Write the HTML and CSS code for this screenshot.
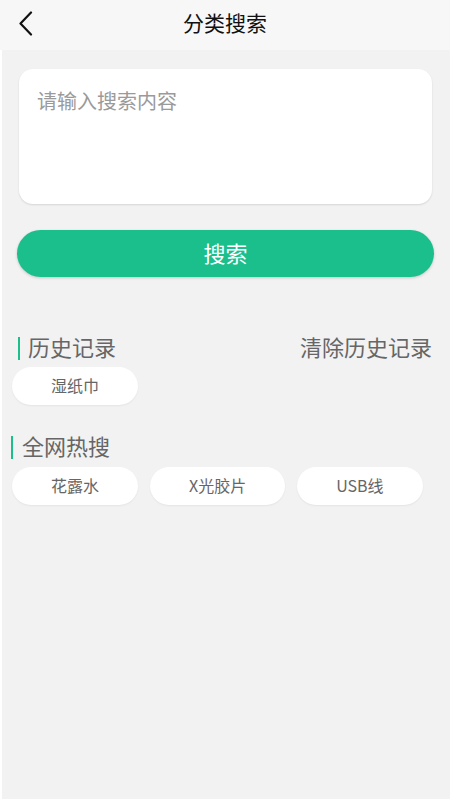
FILE: index.html
```html
<!DOCTYPE html>
<html lang="zh-CN">
<head>
<meta charset="utf-8">
<title>分类搜索</title>
<link rel="stylesheet" href="styles.css">
</head>
<body>
<div class="app">
  <header class="header">
    <span class="back">
      <svg width="14" height="26" viewBox="0 0 14 26"><path d="M12 1.5 L1.5 12.5 L12 23.5" fill="none" stroke="#111" stroke-width="2.2" stroke-linecap="round" stroke-linejoin="round"/></svg>
    </span>
    <h1 class="title">分类搜索</h1>
  </header>
  <main class="content">
    <div class="search-box">
      <span class="placeholder">请输入搜索内容</span>
    </div>
    <div class="search-btn">搜索</div>

    <div class="sec-head sec-history">
      <span class="sec-title"><i class="bar"></i>历史记录</span>
      <span class="clear">清除历史记录</span>
    </div>
    <div class="chips">
      <span class="chip">湿纸巾</span>
    </div>

    <div class="sec-head sec-hot">
      <span class="sec-title"><i class="bar"></i>全网热搜</span>
    </div>
    <div class="chips">
      <span class="chip">花露水</span>
      <span class="chip">X光胶片</span>
      <span class="chip">USB线</span>
    </div>
  </main>
</div>
</body>
</html>
```

FILE: styles.css
```css
* { box-sizing: border-box; }
html, body { margin: 0; padding: 0; }
body {
  font-family: "Noto Sans CJK SC", "Noto Sans", sans-serif;
  background: #fff;
}
.app {
  width: 450px;
  height: 800px;
  background: #f2f2f2;
  border-left: 2px solid #fff;
  border-bottom: 1px solid #fff;
  display: flex;
  flex-direction: column;
}
.header {
  height: 50px;
  background: #f7f7f7;
  display: flex;
  align-items: center;
  justify-content: center;
  position: relative;
  margin-left: -2px;
  padding-bottom: 5px;
}
.back {
  position: absolute;
  left: 19px;
  top: 11px;
  display: flex;
}
.title {
  margin: 0;
  font-size: 21px;
  font-weight: 400;
  color: #111;
  line-height: 1;
}
.content {
  display: flex;
  flex-direction: column;
}
.search-box {
  margin: 19px 18px 0 17px;
  height: 135px;
  background: #fff;
  border-radius: 14px;
  box-shadow: 0 1px 2px rgba(0,0,0,0.12);
  padding: 20px 18px;
}
.placeholder {
  font-size: 20px;
  color: #9a9a9a;
  line-height: 24px;
}
.search-btn {
  margin: 26px 16px 0 15px;
  height: 47px;
  border-radius: 24px;
  background: #1bbf8c;
  color: #fff;
  font-size: 22px;
  display: flex;
  align-items: center;
  justify-content: center;
  padding-bottom: 3px;
  box-shadow: 0 1px 3px rgba(0,0,0,0.18);
}
.sec-head {
  height: 30px;
  display: flex;
  align-items: center;
  justify-content: space-between;
  font-size: 22px;
  color: #666;
}
.sec-history {
  margin-top: 56px;
  padding: 0 18px 0 16px;
}
.sec-hot {
  margin-top: 27px;
  padding: 0 18px 0 9px;
}
.sec-title {
  display: flex;
  align-items: center;
  line-height: 26px;
  padding-bottom: 4px;
}
.bar {
  display: inline-block;
  width: 2px;
  height: 23px;
  background: #1bbf8c;
  margin-right: 8px;
  margin-top: 4px;
}
.sec-hot .bar { margin-right: 9px; }
.clear { line-height: 26px; padding-bottom: 4px; }
.chips {
  display: flex;
  gap: 12px;
  padding: 0 10px;
  margin-top: 4px;
}
.sec-hot + .chips { margin-top: 5px; }
.chip {
  height: 38px;
  padding: 0 39px 3px;
  background: #fff;
  border-radius: 19px;
  font-size: 16px;
  color: #666;
  display: flex;
  align-items: center;
  justify-content: center;
  box-shadow: 0 1px 2px rgba(0,0,0,0.06);
}
```
